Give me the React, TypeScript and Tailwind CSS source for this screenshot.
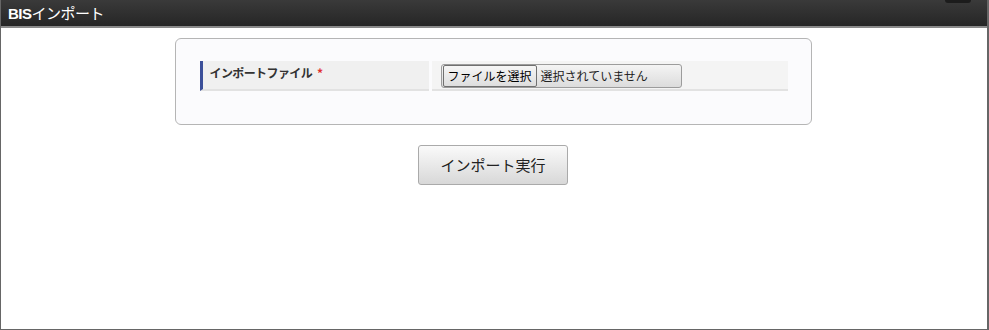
import React from "react";

const font = '"Noto Sans CJK JP", "Liberation Sans", sans-serif';

export default function App() {
  return (
    <div
      className="w-[989px] h-[330px] flex flex-col bg-white border-l border-r-2 border-b border-[#666] overflow-hidden"
      style={{ fontFamily: font }}
    >
      <div className="h-[28px] shrink-0 flex items-center pl-[7px] bg-gradient-to-b from-[#3a3a3a] to-[#262626] border-b-2 border-[#8a8a8a] relative">
        <span className="text-white text-[15px] leading-none tracking-[-0.5px]">
          <b className="font-bold font-['Liberation_Sans']">BIS</b>インポート
        </span>
        <div className="absolute top-0 left-[944px] w-[26px] h-[3px] rounded-b-full bg-[#1c1c1c]" />
      </div>

      <div className="flex flex-col items-center pt-[10px] pr-[2px]">
        <div className="w-[637px] h-[87px] border border-[#b5b5b5] rounded-[6px] bg-[#fbfbfd] pt-[22px] px-[24px]">
          <div className="flex gap-[3px] w-[588px]">
            <div className="w-[229px] h-[30px] bg-[#f0f0f0] border-l-[3px] border-[#3b4f99] border-b-2 border-b-[#e2e2e2] flex items-start pt-[3px] pl-[7px]">
              <span className="text-[12px] font-bold text-[#333] tracking-[-0.6px]">
                インポートファイル<span className="ml-[5px] text-[#e03030]">*</span>
              </span>
            </div>
            <div className="flex-1 h-[30px] bg-[#f4f4f4] border-b-2 border-[#e2e2e2] pl-[9px] pt-[3px]">
              <div className="w-[241px] h-[24px] rounded-[3px] border border-[#9c9c9c] bg-gradient-to-b from-[#f4f4f4] to-[#dcdcdc] flex items-center">
                <div className="h-[22px] ml-[1px] px-[4px] border border-[#707070] rounded-[2px] bg-gradient-to-b from-[#f6f6f6] to-[#dedede] text-[12px] leading-[20px] text-black">
                  ファイルを選択
                </div>
                <span className="ml-[4px] text-[12px] text-[#222]">選択されていません</span>
              </div>
            </div>
          </div>
        </div>

        <button className="mt-[20px] w-[150px] h-[40px] rounded-[3px] border border-[#aaa] bg-gradient-to-b from-[#fafafa] to-[#d8d8d8] text-[15px] text-[#222]">
          インポート実行
        </button>
      </div>
    </div>
  );
}
